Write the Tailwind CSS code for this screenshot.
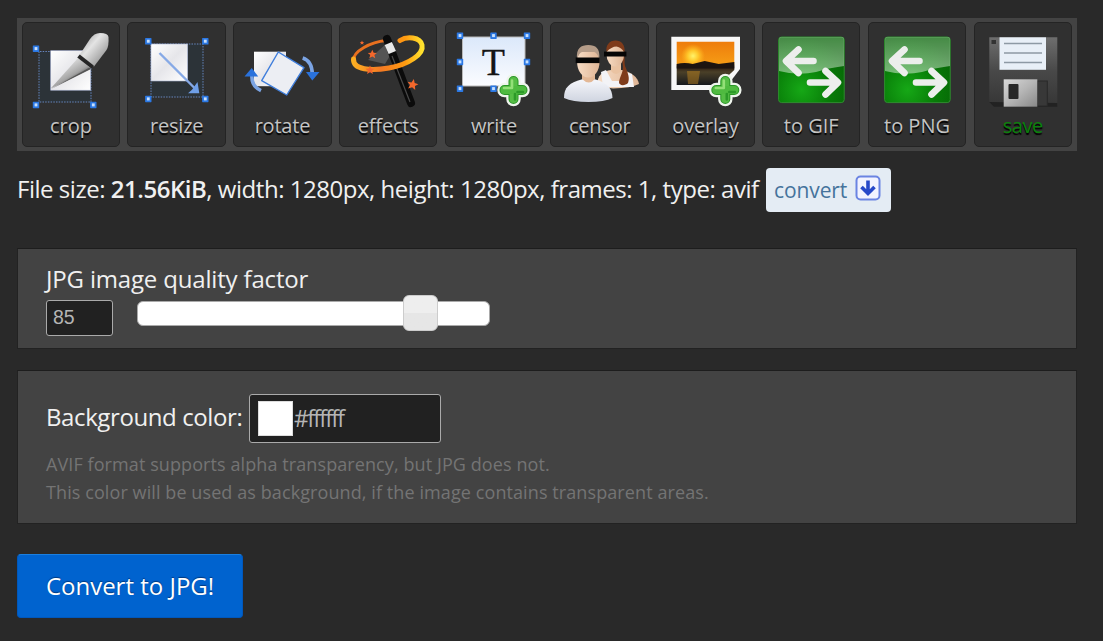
<!DOCTYPE html>
<html lang="en">
<head>
<meta charset="utf-8">
<title>AVIF to JPG</title>
<script src="https://cdn.jsdelivr.net/npm/@tailwindcss/browser@4"></script>
</head>
<body class="h-[641px] overflow-hidden bg-[#292929] pl-[17px] pt-[18px] font-['Open_Sans',sans-serif] text-[#f0f0f0]">

<svg class="absolute size-0" aria-hidden="true">
  <defs>
    <linearGradient id="paper" x1="0" y1="0" x2="1" y2="1"><stop offset="0" stop-color="#fff"/><stop offset=".5" stop-color="#e6e6ea"/><stop offset="1" stop-color="#fff"/></linearGradient>
    <linearGradient id="sheet" x1="0" y1="0" x2="0" y2="1"><stop offset="0" stop-color="#dbe8fa"/><stop offset="1" stop-color="#fbfcff"/></linearGradient>
    <linearGradient id="steel" x1="0" y1="0" x2="1" y2="1"><stop offset="0" stop-color="#8a8a8a"/><stop offset=".4" stop-color="#e4e4e4"/><stop offset="1" stop-color="#777"/></linearGradient>
    <linearGradient id="blade" x1="0" y1="0" x2=".8" y2="1"><stop offset=".3" stop-color="#dedede"/><stop offset=".6" stop-color="#a5a5a5"/><stop offset=".75" stop-color="#555"/></linearGradient>
    <linearGradient id="ring" x1="0" y1="0" x2="1" y2="0"><stop offset="0" stop-color="#fcae22"/><stop offset=".4" stop-color="#f47a24"/><stop offset=".75" stop-color="#ff9a10"/><stop offset="1" stop-color="#ffe22e"/></linearGradient>
    <linearGradient id="sky" x1="0" y1="0" x2="0" y2="1"><stop offset="0" stop-color="#ee7d0c"/><stop offset=".5" stop-color="#f59a14"/><stop offset=".58" stop-color="#2b1a10"/><stop offset=".7" stop-color="#4a4028"/><stop offset="1" stop-color="#16181c"/></linearGradient>
    <radialGradient id="sun"><stop offset="0" stop-color="#fff36a"/><stop offset=".45" stop-color="#ffc82a"/><stop offset="1" stop-color="#ffb020" stop-opacity="0"/></radialGradient>
    <radialGradient id="green" cx=".35" cy=".8" r=".8"><stop offset="0" stop-color="#16a816"/><stop offset=".55" stop-color="#087c08"/><stop offset="1" stop-color="#076407"/></radialGradient>
    <linearGradient id="gloss" x1="0" y1="0" x2="0" y2="1"><stop offset="0" stop-color="#fff" stop-opacity=".25"/><stop offset="1" stop-color="#fff" stop-opacity=".45"/></linearGradient>
    <linearGradient id="floppy" x1="0" y1="0" x2="0" y2="1"><stop offset="0" stop-color="#6e6e6e"/><stop offset=".5" stop-color="#484848"/><stop offset="1" stop-color="#363636"/></linearGradient>
    <linearGradient id="shutter" x1="0" y1="0" x2="1" y2="1"><stop offset="0" stop-color="#d8d8d8"/><stop offset=".5" stop-color="#b5b5b5"/><stop offset="1" stop-color="#888"/></linearGradient>
    <linearGradient id="shirt" x1="0" y1="0" x2="0" y2="1"><stop offset="0" stop-color="#f6f7fb"/><stop offset="1" stop-color="#cfd4e0"/></linearGradient>
    <linearGradient id="skin" x1="0" y1="0" x2="1" y2="0"><stop offset="0" stop-color="#f7dcc4"/><stop offset="1" stop-color="#dfb595"/></linearGradient>
    <g id="handle"><rect x="-3.200" y="-3.200" width="6.400" height="6.400" rx=".6" fill="#2b78e4"/><rect x="-1.400" y="-1.600" width="2.800" height="3" fill="#c8e0fd"/></g>
    <path id="star" d="M0-5 1.5-1.6 5-1.4 2.3.9 3.3 4.5 0 2.5-3.3 4.5-2.3.9-5-1.4-1.5-1.6Z"/>
    <g id="plus" stroke-linecap="round" fill="none">
      <path d="M0-9V9M-9 0H9" stroke="#eff5ed" stroke-width="14.500"/>
      <path d="M0-9V9M-9 0H9" stroke="#2a9626" stroke-width="10"/>
      <path d="M0-9V9" stroke="#55bd45" stroke-width="8"/><path d="M-9 0H9" stroke="#4fba40" stroke-width="8"/>
      <path d="M-1.500-9.500V-2H-9.500" stroke="#93e078" stroke-width="2.600" stroke-linejoin="round"/>
      <path d="M1.500 4V9.500M4 2H9.500" stroke="#2c9a28" stroke-width="2.600"/>
    </g>
    <g id="swap">
      <rect x="16.600" y="15" width="65.600" height="65.600" rx="3" fill="url(#green)" stroke="#2f8d2f"/>
      <path d="M17 17q0-2 2-2h61q2 0 2 2v27q-16 2-28 6-18 4-37-1z" fill="url(#gloss)"/>
      <g fill="none" stroke="#eceeec" stroke-width="6.600" stroke-linecap="round" stroke-linejoin="round">
        <path d="M51.500 39H25M36.500 27.500 24 39l12.500 12"/>
        <path d="M48 60.500H74M63.500 49 76 60.500 63.500 72.500"/>
      </g>
    </g>
  </defs>
</svg>

<nav class="grid h-[133px] w-[1060px] grid-cols-10 gap-x-[7.3px] bg-[#434343] py-[4px] pr-[5px] pl-[4.7px] text-[20px] text-[#c4c4c4]">
  <a class="flex flex-col items-center rounded-[5px] border border-[#242424] bg-[#303030]">
    <svg class="-mt-px h-[88px] w-[98px] shrink-0 overflow-visible" viewBox="0 0 98 88" fill="none">
      <path d="M17 29.500V80h52V29.500z" fill="#2c3338" stroke="#6585bd" stroke-dasharray="1.500 1.200"/>
      <rect x="28.700" y="28.700" width="40" height="39.500" fill="url(#paper)" stroke="#a9b4d4" stroke-width=".6"/>
      <path d="M28.700 66.500 56 36l13 10.500z" fill="url(#blade)"/><path d="m29 67 40-20-1.500-1.500z" fill="#555"/>
      <path d="M57.500 33 68 17q4-6 10-6 8 0 8.500 4 .5 9-2 13L72 44.500z" fill="url(#steel)"/>
      <path d="m56.500 34 14 11" stroke="#262626" stroke-width="4"/>
      <use href="#handle" x="14" y="26.700"/><use href="#handle" x="14" y="83"/><use href="#handle" x="71.300" y="83"/>
    </svg><span class="mt-[2px] leading-[28px] [text-shadow:0_2px_1px_#000]">crop</span></a>
  <a class="flex flex-col items-center rounded-[5px] border border-[#242424] bg-[#303030]">
    <svg class="-mt-px h-[88px] w-[98px] shrink-0 overflow-visible" viewBox="0 0 98 88" fill="none">
      <rect x="23" y="22" width="52" height="53" fill="#2c3338" stroke="#6585bd" stroke-dasharray="1.500 1.200"/>
      <rect x="23" y="22" width="36.700" height="37" fill="url(#paper)" stroke="#a9b4d4" stroke-width=".6"/>
      <path d="m31.500 31 36 36" stroke="#86a9e6" stroke-width="2.400"/><path d="m69.500 60 1.800 11.300H60l4-3.500z" fill="#6f9fe8"/>
      <use href="#handle" x="20.300" y="19.300"/><use href="#handle" x="77.300" y="19.300"/><use href="#handle" x="20.300" y="77"/><use href="#handle" x="77.300" y="77"/>
    </svg><span class="mt-[2px] leading-[28px] tracking-[-0.2px] [text-shadow:0_2px_1px_#000]">resize</span></a>
  <a class="flex flex-col items-center rounded-[5px] border border-[#242424] bg-[#303030]">
    <svg class="-mt-px h-[88px] w-[98px] shrink-0 overflow-visible" viewBox="0 0 98 88" fill="none">
      <rect x="21" y="29.700" width="32" height="34.500" fill="url(#paper)"/>
      <path d="M45.300 30 71 45.700 53.700 73 28.700 58.700z" fill="#eceef3" stroke="#3f7edc" stroke-width="1.400" stroke-linejoin="round"/>
      <path d="M28 68.700Q18 64 19 53" stroke="#7ba4e4" stroke-width="3.600"/><path d="m11.500 54.500 7.200-8.500 6.500 8.500z" fill="#2a72dc"/>
      <path d="M69.700 36Q79 39 79.300 52" stroke="#7ba4e4" stroke-width="3.600"/><path d="m73 50 6.300 8.500 7.200-8.500z" fill="#2a72dc"/>
    </svg><span class="mt-[2px] leading-[28px] tracking-[-0.2px] [text-shadow:0_2px_1px_#000]">rotate</span></a>
  <a class="flex flex-col items-center rounded-[5px] border border-[#242424] bg-[#303030]">
    <svg class="-mt-px h-[88px] w-[98px] shrink-0 overflow-visible" viewBox="0 0 98 88" fill="none">
      <path d="m29 38 18-16 5 10-6 10z" fill="#777" opacity=".5"/>
      <path d="M47 18.500C32 20 14 29 14.500 38.500" stroke="#e9701f" stroke-width="3"/>
      <path d="m48 17 24 64" stroke="#0b0b0b" stroke-width="8" stroke-linecap="round"/><path d="m53 34 18 46" stroke="#4a4a4a" stroke-width="1.200"/>
      <path d="m49.300 21.500 4 9" stroke="#e8e8e8" stroke-width="8"/>
      <path d="M14.500 37C14 48 32 49 50 46c20-3.500 35-14 33-23C81 15 68 14 61 18.500" stroke="url(#ring)" stroke-width="5" stroke-linecap="round"/>
      <g fill="#f4682c"><use href="#star" transform="translate(23 20.700) scale(.45)"/><use href="#star" transform="translate(33.300 32.300) scale(.9)"/><use href="#star" transform="translate(31 48) scale(.9)"/><use href="#star" transform="translate(73.700 62.500) rotate(12) scale(1.100)"/></g>
    </svg><span class="mt-[2px] leading-[28px] tracking-[-0.2px] [text-shadow:0_2px_1px_#000]">effects</span></a>
  <a class="flex flex-col items-center rounded-[5px] border border-[#242424] bg-[#303030]">
    <svg class="-mt-px h-[88px] w-[98px] shrink-0 overflow-visible" viewBox="0 0 98 88" fill="none">
      <rect x="17.500" y="15" width="62.500" height="49" fill="url(#sheet)" stroke="#b9b9b9"/>
      <text x="48.300" y="53" text-anchor="middle" class="fill-[#151515] stroke-[#151515] stroke-[0.3px] font-['Liberation_Serif',serif] text-[38px]">T</text>
      <use href="#handle" x="15" y="13.700"/><use href="#handle" x="48.500" y="13.700"/><use href="#handle" x="82" y="13.700"/><use href="#handle" x="15" y="40"/><use href="#handle" x="82" y="40"/><use href="#handle" x="15" y="66.700"/><use href="#handle" x="48.500" y="66.700"/>
      <use href="#plus" x="68.500" y="68"/>
    </svg><span class="mt-[2px] leading-[28px] tracking-[-0.2px] [text-shadow:0_2px_1px_#000]">write</span></a>
  <a class="flex flex-col items-center rounded-[5px] border border-[#242424] bg-[#303030]">
    <svg class="-mt-px h-[88px] w-[98px] shrink-0 overflow-visible" viewBox="0 0 98 88">
      <path d="M46 64c0-11 6-15 14-16h11c9 2 16 7 17 14q-8 4-26 4.500z" fill="url(#skin)"/>
      <path d="m50 50 5-2 6 11h8l5-9 7 2 2 13H52z" fill="#f3f3f6"/>
      <path d="M60 40h10v9q-5 6-10 0z" fill="#eac3a2"/>
      <path d="M70 27c5 3 3 12 4 17 3 7 5 12 3 17-3 3-9 3-9-1 1-6 4-9 4-15z" fill="#7f3b1a"/>
      <ellipse cx="64.300" cy="32.500" rx="8.800" ry="12" fill="url(#skin)"/>
      <path d="M55.500 30c-1-7 3-11.500 9-11.500s10 4.500 9 12q-3-5-8-6-5 0-10 5.500z" fill="#7f3b1a"/>
      <rect x="53" y="29.600" width="22.400" height="4.900" fill="#050505"/>
      <path d="M13 76c0-11 5-15 19-19h11c14 4 18 9 18.500 19q-8 4-24 4t-24.500-4z" fill="url(#shirt)"/>
      <path d="M31 48h13v9q-6 7-13 0z" fill="#e3b896"/>
      <ellipse cx="37.300" cy="40" rx="11.200" ry="15.500" fill="url(#skin)"/>
      <path d="M26 37c-1-11 4-14 11.300-14s12 3 11 14q-2-6-5-7H31q-3 1-5 7z" fill="#b59c88"/>
      <rect x="24.700" y="35.500" width="24" height="5.600" fill="#050505"/>
    </svg><span class="mt-[2px] leading-[28px] tracking-[-0.2px] [text-shadow:0_2px_1px_#000]">censor</span></a>
  <a class="flex flex-col items-center rounded-[5px] border border-[#242424] bg-[#303030]">
    <svg class="-mt-px h-[88px] w-[98px] shrink-0 overflow-visible" viewBox="0 0 98 88">
      <path d="M15.300 14.700H84V47L68 68H15.300z" fill="#f7f7f7"/>
      <path d="M20.700 19.700h57.600V48L62 63H20.700z" fill="url(#sky)"/>
      <circle cx="37" cy="34" r="12" fill="url(#sun)"/>
      <path d="M20.700 42q8-2 16 0l12-3 14 3 15.600-2v6.500H20.700z" fill="#1c1410"/>
      <path d="M31 49h13l-2 13H32z" fill="#c98b20" opacity=".45"/>
      <use href="#plus" x="69.300" y="68"/>
    </svg><span class="mt-[2px] leading-[28px] tracking-[-0.2px] [text-shadow:0_2px_1px_#000]">overlay</span></a>
  <a class="flex flex-col items-center rounded-[5px] border border-[#242424] bg-[#303030]">
    <svg class="-mt-px h-[88px] w-[98px] shrink-0 overflow-visible" viewBox="0 0 98 88"><use href="#swap"/></svg><span class="mt-[2px] leading-[28px] [text-shadow:0_2px_1px_#000]">to GIF</span></a>
  <a class="flex flex-col items-center rounded-[5px] border border-[#242424] bg-[#303030]">
    <svg class="-mt-px h-[88px] w-[98px] shrink-0 overflow-visible" viewBox="0 0 98 88"><use href="#swap"/></svg><span class="mt-[2px] leading-[28px] [text-shadow:0_2px_1px_#000]">to PNG</span></a>
  <a class="flex flex-col items-center rounded-[5px] border border-[#242424] bg-[#303030]">
    <svg class="-mt-px h-[88px] w-[98px] shrink-0 overflow-visible" viewBox="0 0 98 88">
      <path d="M15.300 15.300h68v68.200H21l-5.700-4z" fill="url(#floppy)"/>
      <path d="M15.300 80 20 84.700H83.300V81z" fill="#222"/>
      <rect x="17.500" y="18" width="4.500" height="4" fill="#333"/>
      <rect x="25.500" y="15.300" width="46.500" height="32.500" fill="#e8eff7"/>
      <path d="M30 21.500h38M30 31h38M30 40.500h38" stroke="#8d99a4" stroke-width="1.300"/>
      <rect x="63.300" y="59" width="10" height="25" fill="#383838" stroke="#292929"/>
      <rect x="29.700" y="57.300" width="33.600" height="27.400" fill="url(#shutter)"/>
      <rect x="34.500" y="62" width="10" height="15" rx="1" fill="#262626"/>
    </svg><span class="mt-[2px] leading-[28px] tracking-[-0.4px] text-[#0a820a] [text-shadow:0_2px_1px_#000]">save</span></a>
</nav>

<div class="mt-[17px] flex h-[44px] items-center text-[24px]">
  <p class="-mt-[2px] w-[749px] whitespace-nowrap tracking-[-0.47px]">File size: <b class="font-semibold">21.56KiB</b>, width: 1280px, height: 1280px, frames: 1, type: avif</p>
  <a class="flex h-[44px] w-[125px] items-center gap-[8px] rounded-[4px] bg-[#e4ecf4] pl-[8px] text-[21px] text-[#45739c]"><span class="mt-[2px] tracking-[-0.1px]">convert</span>
    <svg class="-mt-[5px] size-[26px]" viewBox="0 0 26 26"><rect x="1.500" y="1.500" width="23" height="23" rx="4" fill="#f2f3ff" stroke="#6b84e2" stroke-width="2"/><path d="M13 5.500v12M6.500 12l6.500 6.500 6.500-6.500" fill="none" stroke="#2748c9" stroke-width="3.600"/></svg>
  </a>
</div>

<section class="mt-[36px] h-[101px] w-[1060px] border border-[#222] border-t-[#1d1d1d] bg-[#434343] pl-[28px] pt-[13px]">
  <div class="text-[24px] leading-[34px] tracking-[-0.17px]">JPG image quality factor</div>
  <div class="mt-[4px] flex">
    <div class="flex h-[36px] w-[67px] items-center rounded-[3px] border border-[#aaa] bg-[#212121] pl-[6px] font-['Liberation_Sans',sans-serif] text-[19.500px] text-[#b5b5b5]">85</div>
    <div class="relative mt-[1px] ml-[24px] h-[25px] w-[353px] rounded-[6px] border border-[#aaa] bg-white">
      <div class="absolute -top-[7px] left-[265px] h-[36px] w-[35px] rounded-[6px] border border-[#ccc] bg-linear-to-b from-[#eee] from-50% to-[#e6e6e6] to-50%"></div>
    </div>
  </div>
</section>

<section class="mt-[21px] h-[154px] w-[1060px] border border-[#222] border-t-[#1d1d1d] bg-[#434343] pl-[28px] pt-[23px]">
  <div class="flex h-[49px] items-center text-[24px]">
    <p class="-mt-[3px] w-[203px] whitespace-nowrap tracking-[-0.4px]">Background color:</p>
    <div class="flex h-[49px] w-[192px] items-center rounded-[3px] border border-[#aaa] bg-[#212121] pl-[8px]"><i class="mr-px block size-[35px] border border-[#ddd] bg-white"></i><span class="text-[23px] tracking-[-1.7px] text-[#b5b5b5] [font-variant-ligatures:none]">#ffffff</span></div>
  </div>
  <p class="mt-[7px] text-[18px] leading-[28px] tracking-[0.09px] text-[#747474]">AVIF format supports alpha transparency, but JPG does not.<br>This color will be used as background, if the image contains transparent areas.</p>
</section>

<button class="mt-[30px] block h-[64px] w-[226px] rounded-[4px] border border-[#0058bd] border-t-[#1a7fe0] bg-[#0063cf] text-[24px] text-white"><span class="[text-shadow:0_-1px_1px_#003a80]">Convert to JPG!</span></button>
</body>
</html>
